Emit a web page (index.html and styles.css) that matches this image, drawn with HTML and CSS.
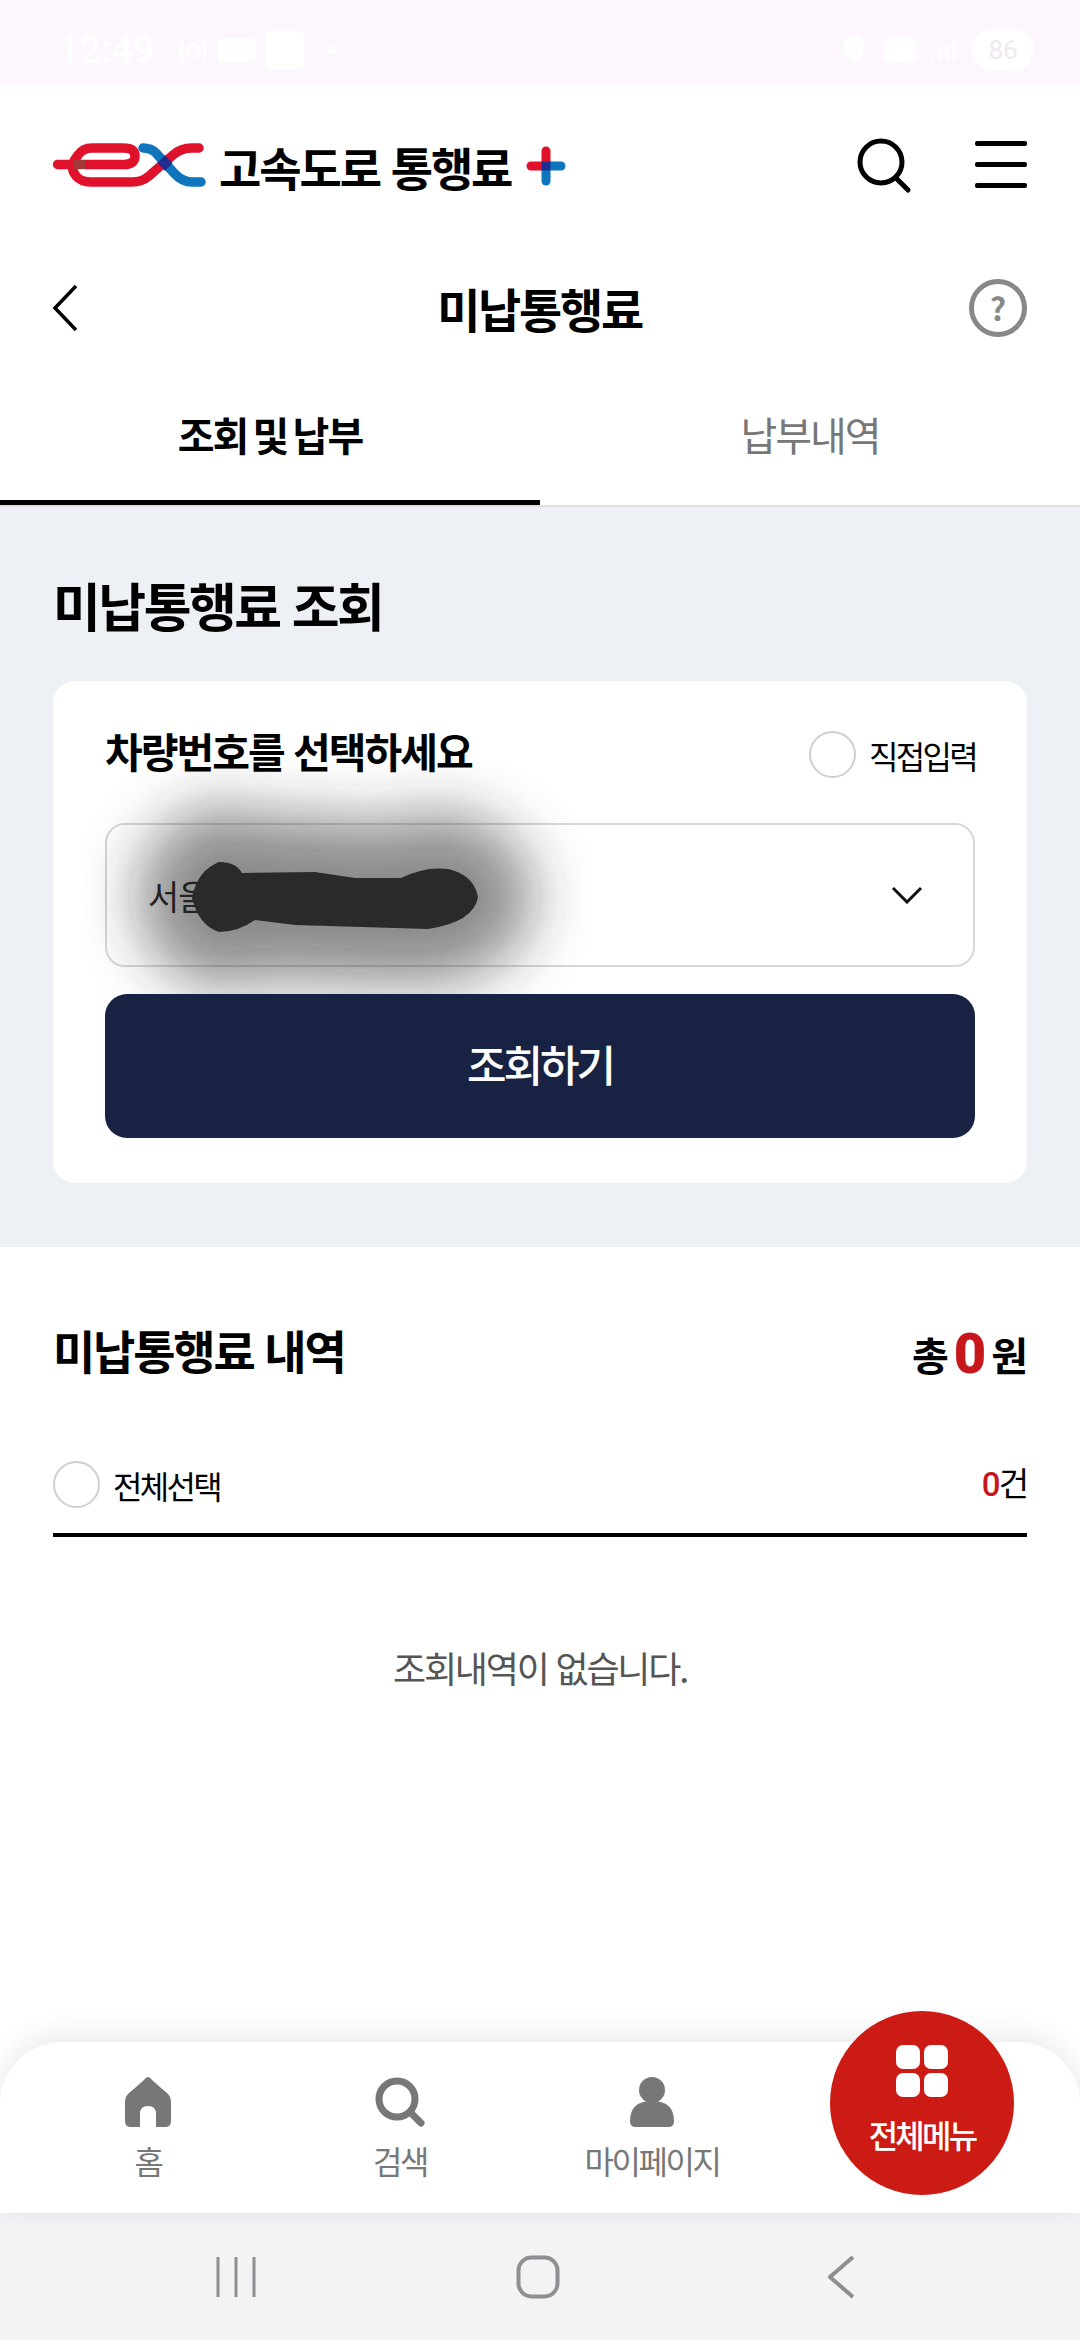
FILE: index.html
```html
<!DOCTYPE html>
<html lang="ko">
<head>
<meta charset="utf-8">
<title>미납통행료</title>
<link rel="stylesheet" href="styles.css">
</head>
<body>
<div class="app">
  <div class="status">
    <div class="status-group">
      <span class="time">12:49</span>
      <svg class="st-icon" width="30" height="30" viewBox="0 0 30 30"><path d="M5 3 Q1 15 5 27M25 3 Q29 15 25 27" fill="none" stroke="#fff" stroke-width="3"/><circle cx="15" cy="16" r="6" fill="none" stroke="#fff" stroke-width="3"/></svg>
      <span class="st-box"></span>
      <span class="st-box tall"></span>
      <span class="st-dot"></span>
    </div>
    <div class="status-group">
      <svg class="st-loc" width="24" height="30" viewBox="0 0 24 30"><path d="M12 1C5 1 1 6 1 12c0 7 11 17 11 17s11-10 11-17C23 6 19 1 12 1z" fill="#fff"/></svg>
      <span class="st-box wide"></span>
      <svg class="st-bars" width="26" height="26" viewBox="0 0 26 26"><path d="M3 24V18M10 24V12M17 24V7M24 24V2" stroke="#fff" stroke-width="3"/></svg>
      <span class="st-batt">86</span>
    </div>
  </div>

  <header class="top">
    <div class="logo">
      <svg class="ex" width="156" height="50" viewBox="0 0 156 50">
        <path d="M93 7 Q101 7 106 12 L124 32 Q132 41 142 41 H151" fill="none" stroke="#0f76bd" stroke-width="9.5" stroke-linecap="round"/>
        <path d="M7.500 23.500 H74 Q85 23.500 85 15 Q85 7 73 7 H42 Q33 7 28 14 L24 20 Q20 28 26 35 Q31 41 41 41 H82 Q92 41 99 35 L123 14 Q131 7 142 7 H149" fill="none" stroke="#e0112b" stroke-width="9.5" stroke-linecap="round"/>
        <rect x="23" y="19" width="12" height="9" fill="#a23a3a"/>
        <path d="M115 14 L122.500 22 L115 30 L107.500 22 Z" fill="#1f2f8f"/>
      </svg>
      <span class="logo-text">고속도로 통행료</span>
      <svg class="plus" width="42" height="42" viewBox="0 0 42 42">
        <path d="M21 21 V6" stroke="#e0112b" stroke-width="9" stroke-linecap="round"/>
        <path d="M21 21 H6" stroke="#e0112b" stroke-width="9" stroke-linecap="round"/>
        <path d="M21 21 V36" stroke="#0f76bd" stroke-width="9" stroke-linecap="round"/>
        <path d="M21 21 H36" stroke="#0f76bd" stroke-width="9" stroke-linecap="round"/>
        <rect x="16.500" y="16.500" width="9" height="9" fill="#1f2f8f"/>
      </svg>
    </div>
    <div class="top-actions">
      <svg width="56" height="56" viewBox="0 0 56 56"><circle cx="25" cy="24" r="21" fill="none" stroke="#000" stroke-width="5"/><path d="M40 40 L52 52" stroke="#000" stroke-width="5" stroke-linecap="round"/></svg>
      <div class="burger"><i></i><i></i><i></i></div>
    </div>
  </header>

  <div class="titlebar">
    <svg width="26" height="48" viewBox="0 0 26 48"><path d="M24 2 L3 24 L24 46" fill="none" stroke="#000" stroke-width="3.500"/></svg>
    <h1 class="page-title">미납통행료</h1>
    <span class="help">?</span>
  </div>

  <nav class="tabs">
    <div class="tab active">조회 및 납부</div>
    <div class="tab">납부내역</div>
  </nav>

  <section class="query">
    <h2 class="section-title big">미납통행료 조회</h2>
    <div class="card">
      <div class="card-head">
        <div class="card-title">차량번호를 선택하세요</div>
        <label class="radio-row shifted"><span class="radio"></span><span class="radio-label">직접입력</span></label>
      </div>
      <div class="select">
        <span class="select-val">서울</span>
        <svg width="32" height="18" viewBox="0 0 32 18"><path d="M2 2 L16 16 L30 2" fill="none" stroke="#111" stroke-width="3"/></svg>
      </div>
      <button class="btn">조회하기</button>
      <svg class="redact" width="540" height="234" viewBox="0 0 540 234">
        <defs><filter id="blur" x="-40%" y="-150%" width="180%" height="400%"><feGaussianBlur stdDeviation="30"/></filter></defs>
        <path d="M139 102 Q156 102 162 113 L235 112 L275 118 L321 118 Q345 106 368 109 Q394 115 398 137 Q394 162 348 169 L215 165 L175 160 Q158 172 139 172 Q118 165 112 137 Q118 110 139 102 Z" fill="#222" stroke="#222" stroke-width="110" stroke-linejoin="round" opacity=".52" filter="url(#blur)"/>
        <path d="M139 102 Q156 102 162 113 L235 112 L275 118 L321 118 Q345 106 368 109 Q394 115 398 137 Q394 162 348 169 L215 165 L175 160 Q158 172 139 172 Q118 165 112 137 Q118 110 139 102 Z" fill="#2a2a2a"/>
      </svg>
    </div>
  </section>

  <section class="list">
    <div class="list-head">
      <h2 class="section-title">미납통행료 내역</h2>
      <div class="total">총<b>0</b>원</div>
    </div>
    <div class="select-all">
      <label class="radio-row"><span class="radio"></span><span class="radio-label">전체선택</span></label>
      <div class="count"><b>0</b>건</div>
    </div>
    <p class="empty">조회내역이 없습니다.</p>
  </section>

  <footer class="bottom">
    <div class="nav-item">
      <svg width="46" height="50" viewBox="0 0 46 50"><path d="M23 0 Q25 0 27 3 L43 17 Q46 20 46 24 V44 Q46 50 40 50 H31 V37 Q31 29 23 29 Q15 29 15 37 V50 H6 Q0 50 0 44 V24 Q0 20 3 17 L19 3 Q21 0 23 0Z" fill="#777"/></svg>
      <span>홈</span>
    </div>
    <div class="nav-item">
      <svg width="50" height="50" viewBox="0 0 50 50"><circle cx="22" cy="22" r="18" fill="none" stroke="#777" stroke-width="7"/><path d="M35 35 L46 46" stroke="#777" stroke-width="7" stroke-linecap="round"/></svg>
      <span>검색</span>
    </div>
    <div class="nav-item">
      <svg width="44" height="50" viewBox="0 0 44 50"><circle cx="22" cy="13" r="13" fill="#777"/><path d="M0 44 Q0 24 22 24 Q44 24 44 44 Q44 50 38 50 H6 Q0 50 0 44Z" fill="#777"/></svg>
      <span>마이페이지</span>
    </div>
    <div class="fab">
      <div class="fab-grid"><i></i><i></i><i></i><i></i></div>
      <span>전체메뉴</span>
    </div>
  </footer>

  <div class="sysnav">
    <svg width="40" height="42" viewBox="0 0 40 42"><path d="M2 1 V41M20 1 V41M38 1 V41" stroke="#8e8e93" stroke-width="3"/></svg>
    <svg width="44" height="44" viewBox="0 0 44 44"><rect x="2.500" y="2.500" width="39" height="39" rx="13" fill="none" stroke="#8e8e93" stroke-width="4"/></svg>
    <svg width="28" height="44" viewBox="0 0 28 44"><path d="M26 2 L3 22 L26 42" fill="none" stroke="#8e8e93" stroke-width="4" stroke-linejoin="round"/></svg>
  </div>
</div>
</body>
</html>
```
FILE: styles.css
```css
* { box-sizing: border-box; }
html, body { margin: 0; padding: 0; background: #fff; }
body { font-family: "Noto Sans CJK KR", "Noto Sans", sans-serif; color: #000; }
.app { width: 1080px; height: 2340px; display: flex; flex-direction: column; overflow: hidden; position: relative; }

.status { height: 85px; background: #fdf6fe; display: flex; justify-content: space-between; align-items: center; padding: 14px 46px 0 58px; flex: none; }
.status-group { display: flex; align-items: center; gap: 10px; }
.time { font-family: "Roboto", sans-serif; font-size: 38px; color: #fff; font-weight: 500; margin-right: 14px; }
.st-box { width: 38px; height: 24px; background: #fff; border-radius: 5px; display: block; }
.st-box.tall { height: 38px; width: 38px; }
.st-box.wide { width: 32px; height: 26px; }
.st-dot { width: 8px; height: 8px; border-radius: 50%; background: #fff; margin-left: 14px; }
.st-loc { margin-right: 8px; }
.st-bars { margin: 0 6px 0 4px; }
.st-batt { width: 62px; height: 42px; border-radius: 21px; background: #fff; color: #f1e9f2; font-size: 26px; line-height: 42px; text-align: center; font-family: "Roboto", sans-serif; }

.top { height: 155px; flex: none; display: flex; justify-content: space-between; align-items: center; padding: 6px 53px 0 50px; }
.logo { display: flex; align-items: center; }
.logo-text { font-size: 46px; font-weight: 700; letter-spacing: -2.100px; margin-left: 13px; line-height: 50px; }
.plus { margin-left: 14px; }
.top-actions { display: flex; align-items: center; gap: 63px; }
.burger { width: 52px; height: 47px; display: flex; flex-direction: column; justify-content: space-between; margin-bottom: 3px; }
.burger i { display: block; height: 5px; background: #000; border-radius: 2px; }

.titlebar { height: 136px; flex: none; display: grid; grid-template-columns: 1fr auto 1fr; align-items: center; padding: 0 53px 0 52px; }
.page-title { margin: 0; font-size: 47px; font-weight: 700; letter-spacing: -2.300px; line-height: 60px; }
.help { width: 58px; height: 58px; border: 5px solid #888; border-radius: 50%; color: #888; font-size: 32px; font-weight: 700; line-height: 46px; text-align: center; display: block; justify-self: end; }

.tabs { height: 131px; flex: none; display: flex; border-bottom: 2px solid #dcdee3; }
.tab { flex: 1; font-size: 40px; color: #777; letter-spacing: -2px; text-align: center; padding-top: 33px; line-height: 50px; height: 129px; }
.tab.active { color: #000; font-weight: 700; border-bottom: 5px solid #000; word-spacing: -4px; }

.query { height: 740px; flex: none; background: #edf0f5; padding: 63px 53px 0; }
.section-title { margin: 0; font-size: 46px; font-weight: 700; letter-spacing: -2.200px; line-height: 60px; }
.section-title.big { font-size: 52px; letter-spacing: -2.500px; line-height: 70px; }
.card { margin-top: 41px; background: #fff; border-radius: 22px; height: 502px; padding: 46px 52px 0; position: relative; }
.card-head { display: flex; justify-content: space-between; align-items: center; height: 50px; }
.card-title { font-size: 41px; font-weight: 700; letter-spacing: -2px; line-height: 50px; margin-bottom: 5px; }
.radio-row { display: flex; align-items: center; gap: 13px; }
.radio-row.shifted { padding-top: 5px; margin-right: -1px; }
.radio { width: 47px; height: 47px; border: 2px solid #cfcfcf; border-radius: 50%; display: block; background: #fff; flex: none; }
.radio-label { font-size: 32px; letter-spacing: -2.700px; }
.select { margin-top: 46px; height: 144px; border: 2px solid #d8d8d8; border-radius: 20px; display: flex; align-items: center; justify-content: space-between; padding: 0 50px 0 41px; }
.select-val { font-size: 34px; color: #222; letter-spacing: -1px; }
.btn { display: block; width: 100%; margin-top: 27px; height: 144px; border: 0; border-radius: 22px; background: #182343; color: #fff; font-family: inherit; font-size: 43px; font-weight: 500; letter-spacing: -3px; padding: 0 0 6px; }
.redact { position: absolute; left: 27px; top: 79px; pointer-events: none; }

.list { flex: 1; padding: 67px 53px 0; }
.list-head { display: flex; justify-content: space-between; align-items: center; height: 70px; }
.total { font-size: 40px; font-weight: 700; display: flex; align-items: center; gap: 6px; letter-spacing: -1px; padding-top: 9px; }
.total b { color: #c8171c; font-size: 56px; font-family: "Roboto", sans-serif; line-height: 60px; }
.select-all { margin-top: 77px; height: 76px; border-bottom: 4px solid #000; display: flex; justify-content: space-between; align-items: flex-start; }
.count { font-size: 33px; letter-spacing: -2px; line-height: 42px; }
.count b { color: #c8171c; font-weight: 500; font-family: "Roboto", sans-serif; }
.empty { margin: 105px 0 0; text-align: center; font-size: 36px; font-weight: 400; color: #555; letter-spacing: -2.200px; line-height: 50px; }

.bottom { height: 171px; flex: none; background: #fff; border-radius: 62px 62px 0 0; box-shadow: 0 -6px 30px rgba(0,0,0,.09); position: relative; display: grid; grid-template-columns: repeat(3, 252px); padding: 35px 0 0 22px; }
.nav-item { display: flex; flex-direction: column; align-items: center; gap: 10px; font-size: 32px; color: #777; letter-spacing: -2.400px; }
.nav-item span { line-height: 46px; }
.fab { position: absolute; left: 830px; top: -31px; width: 184px; height: 184px; border-radius: 50%; background: #cc1b14; color: #fff; display: flex; flex-direction: column; align-items: center; padding-top: 34px; }
.fab-grid { display: grid; grid-template-columns: 24px 24px; grid-auto-rows: 24px; gap: 4px; width: 52px; }
.fab-grid i { display: block; background: #fff; border-radius: 7px; }
.fab span { font-size: 32px; font-weight: 500; letter-spacing: -2.800px; line-height: 44px; margin-top: 15px; }

.sysnav { height: 127px; flex: none; background: #f3f2f5; display: grid; grid-template-columns: 300px 311px auto; justify-content: start; align-items: center; padding: 1px 0 0 216px; }
```
